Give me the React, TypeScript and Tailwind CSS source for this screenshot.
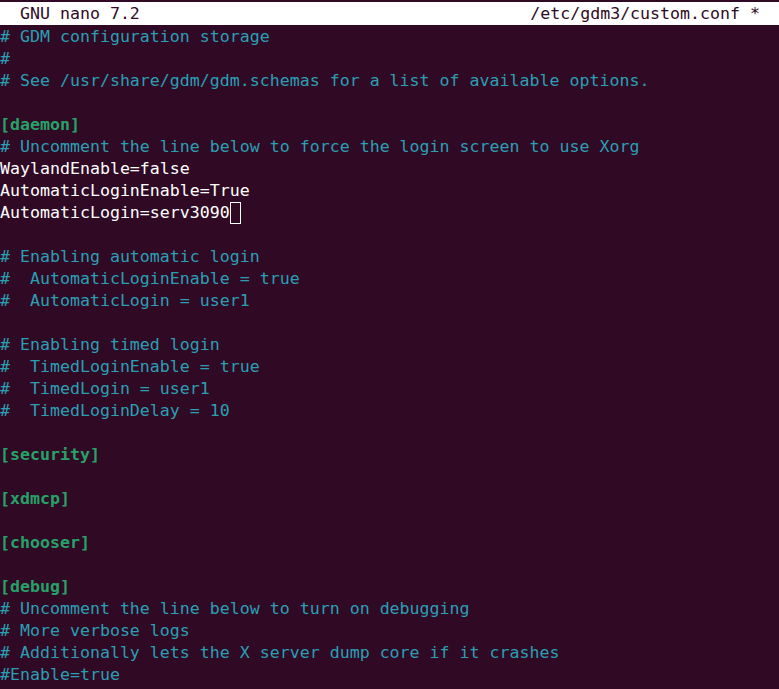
type Kind = "comment" | "section" | "plain";

interface Line {
  text: string;
  kind: Kind;
  cursor?: boolean;
}

const lines: Line[] = [
  { text: "# GDM configuration storage", kind: "comment" },
  { text: "#", kind: "comment" },
  { text: "# See /usr/share/gdm/gdm.schemas for a list of available options.", kind: "comment" },
  { text: "", kind: "plain" },
  { text: "[daemon]", kind: "section" },
  { text: "# Uncomment the line below to force the login screen to use Xorg", kind: "comment" },
  { text: "WaylandEnable=false", kind: "plain" },
  { text: "AutomaticLoginEnable=True", kind: "plain" },
  { text: "AutomaticLogin=serv3090", kind: "plain", cursor: true },
  { text: "", kind: "plain" },
  { text: "# Enabling automatic login", kind: "comment" },
  { text: "#  AutomaticLoginEnable = true", kind: "comment" },
  { text: "#  AutomaticLogin = user1", kind: "comment" },
  { text: "", kind: "plain" },
  { text: "# Enabling timed login", kind: "comment" },
  { text: "#  TimedLoginEnable = true", kind: "comment" },
  { text: "#  TimedLogin = user1", kind: "comment" },
  { text: "#  TimedLoginDelay = 10", kind: "comment" },
  { text: "", kind: "plain" },
  { text: "[security]", kind: "section" },
  { text: "", kind: "plain" },
  { text: "[xdmcp]", kind: "section" },
  { text: "", kind: "plain" },
  { text: "[chooser]", kind: "section" },
  { text: "", kind: "plain" },
  { text: "[debug]", kind: "section" },
  { text: "# Uncomment the line below to turn on debugging", kind: "comment" },
  { text: "# More verbose logs", kind: "comment" },
  { text: "# Additionally lets the X server dump core if it crashes", kind: "comment" },
  { text: "#Enable=true", kind: "comment" },
];

const kindClass: Record<Kind, string> = {
  comment: "text-[#2a9fb4]",
  section: "text-[#26a269] font-bold",
  plain: "text-[#ffffff]",
};

export default function App() {
  return (
    <div
      className="w-[779px] h-[689px] overflow-hidden bg-[#300a24] pt-[2px] text-[16.6px] leading-[22px]"
      style={{ fontFamily: '"DejaVu Sans Mono", "Liberation Mono", monospace' }}
    >
      {/* nano title bar */}
      <div className="h-[23px] bg-[#ffffff] text-[#300a24] flex items-center justify-between pr-[19px] whitespace-pre">
        <span>{"  GNU nano 7.2"}</span>
        <span>/etc/gdm3/custom.conf *</span>
      </div>

      <div className="whitespace-pre pt-[1px]">
        {lines.map((line, i) => (
          <div key={i} className={`h-[22px] flex ${kindClass[line.kind]}`}>
            <span>{line.text}</span>
            {line.cursor && (
              <span className="w-[11px] h-[22px] border border-[#ffffff] box-border" />
            )}
          </div>
        ))}
      </div>
    </div>
  );
}
